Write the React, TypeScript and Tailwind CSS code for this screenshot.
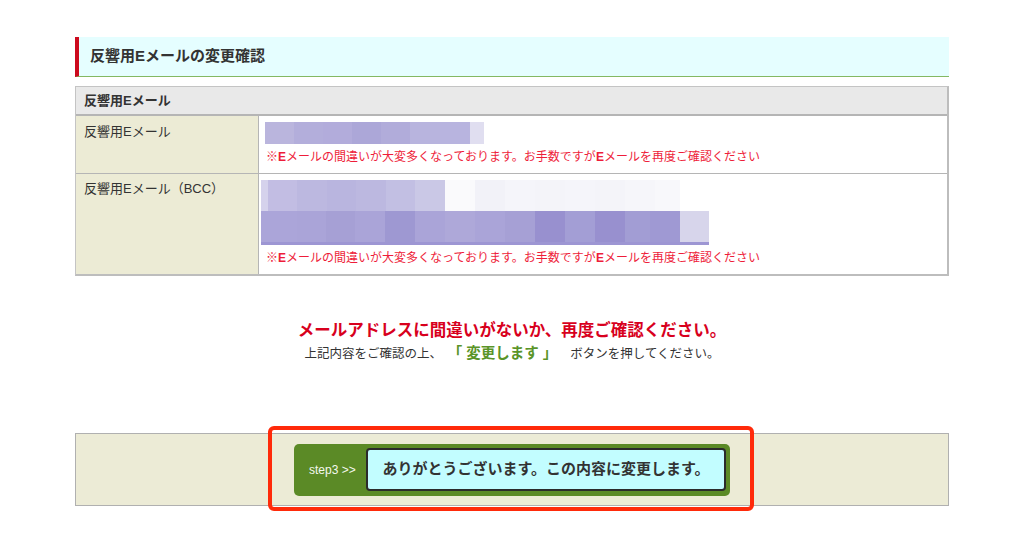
const row1 = [
  'w-[29px] bg-[#bab5dd]',
  'w-[29px] bg-[#b3aedb]',
  'w-[29px] bg-[#b2acdb]',
  'w-[29px] bg-[#aca7d8]',
  'w-[29px] bg-[#b1acda]',
  'w-[30px] bg-[#b8b4de]',
  'w-[30px] bg-[#b8b4df]',
  'w-[14px] bg-[#e0def0]',
];

const row2Top = [
  'w-[7px] bg-[#d5d2ec]',
  'w-[29px] bg-[#c2bde3]',
  'w-[30px] bg-[#bcb8e0]',
  'w-[29px] bg-[#b9b5df]',
  'w-[30px] bg-[#bcb8e0]',
  'w-[29px] bg-[#c2bfe3]',
  'w-[30px] bg-[#cac8e6]',
  'w-[30px] bg-[#fafafc]',
  'w-[30px] bg-[#f2f2f8]',
  'w-[30px] bg-[#f5f5fa]',
  'w-[30px] bg-[#f4f4f9]',
  'w-[30px] bg-[#f5f5fa]',
  'w-[30px] bg-[#f4f4f9]',
  'w-[30px] bg-[#f6f6fa]',
  'w-[25px] bg-[#f8f8fb]',
];

const row2Bottom = [
  'w-[36px] bg-[#aba5d9]',
  'w-[29px] bg-[#aaa4d8]',
  'w-[29px] bg-[#a6a0d5]',
  'w-[30px] bg-[#aaa4d8]',
  'w-[30px] bg-[#9e98d2]',
  'w-[30px] bg-[#aaa4d8]',
  'w-[30px] bg-[#aea8d9]',
  'w-[30px] bg-[#aaa4d8]',
  'w-[30px] bg-[#a6a0d5]',
  'w-[30px] bg-[#9890cf]',
  'w-[30px] bg-[#a39ed5]',
  'w-[30px] bg-[#9890cf]',
  'w-[25px] bg-[#a29dd4]',
  'w-[30px] bg-[#9f99d3]',
  'w-[29px] bg-[#d7d5eb]',
];

function Mosaic({ cells, h }: { cells: string[]; h: string }) {
  return (
    <div className={`flex ${h}`}>
      {cells.map((c, i) => (
        <div key={i} className={`h-full ${c}`} />
      ))}
    </div>
  );
}

function Note() {
  return (
    <p className="whitespace-nowrap text-[12px] leading-[14px] text-[#ee1d3a]">
      ※<span className="font-bold">E</span>メールの間違いが大変多くなっております。お手数ですが<span className="font-bold">E</span>メールを再度ご確認ください
    </p>
  );
}

export default function App() {
  return (
    <div
      className="min-h-[560px] bg-white pt-[37px]"
      style={{ fontFamily: '"Liberation Sans", "Noto Sans CJK JP", sans-serif' }}
    >
      <div className="mx-auto w-[874px]">
        <h2 className="flex h-[40px] items-center border-b border-l-[4px] border-b-[#84b863] border-l-[#cc0a1e] bg-[#e5feff] pl-[11px] text-[15px] font-bold text-[#333]">
          反響用Eメールの変更確認
        </h2>

        <div className="mt-[9px] border border-r-2 border-b-2 border-[#c4c4c4] border-r-[#bdbdbd] border-b-[#bdbdbd] text-[13px] text-[#333]">
          <div className="flex h-[29px] items-center border-b-2 border-[#b5b5b5] bg-[#e9e9e9] pl-[8px] font-bold">
            反響用Eメール
          </div>
          <div className="flex h-[58px] border-b border-[#b5b5b5]">
            <div className="w-[183px] shrink-0 border-r border-[#b5b5b5] bg-[#ecebd5] pl-[8px] pt-[6px]">
              反響用Eメール
            </div>
            <div className="flex flex-col pl-[6px] pt-[6px]">
              <Mosaic cells={row1} h="h-[22px]" />
              <div className="mt-[6px] pl-[1px]">
                <Note />
              </div>
            </div>
          </div>
          <div className="flex h-[100px]">
            <div className="w-[183px] shrink-0 border-r border-[#b5b5b5] bg-[#ecebd5] pl-[8px] pt-[5px]">
              反響用Eメール（BCC）
            </div>
            <div className="flex flex-col pl-[2px] pt-[6px]">
              <Mosaic cells={row2Top} h="h-[31px]" />
              <div className="w-[448px] border-b-[3px] border-[#9d96d3]">
                <Mosaic cells={row2Bottom} h="h-[31px]" />
              </div>
              <div className="mt-[6px] pl-[5px]">
                <Note />
              </div>
            </div>
          </div>
        </div>

        <div className="mt-[43px] flex flex-col items-center">
          <p className="text-[16.5px] font-bold leading-[22px] text-[#d8001d]">
            メールアドレスに間違いがないか、再度ご確認ください。
          </p>
          <p className="mt-[3px] text-[12.5px] leading-[18px] text-[#333]">
            上記内容をご確認の上、
            <span className="mx-[13px] text-[14.5px] font-bold text-[#5a9428]">「 変更します 」</span>
            ボタンを押してください。
          </p>
        </div>

        <div className="relative mt-[70px] flex h-[73px] items-center justify-center border border-[#b0b0b0] bg-[#ecebd6]">
          <div className="flex h-[52px] w-[436px] items-center rounded-[5px] bg-[#5b8a26] pl-[15px] pr-[4px]">
            <span className="w-[57px] text-[12px] text-[#f4f8ee]">step3 &gt;&gt;</span>
            <button className="flex h-[43px] flex-1 items-center justify-center rounded-[4px] border-2 border-[#2b2b2b] bg-[#c2fdff] text-[15px] font-bold text-[#333]">
              ありがとうございます。この内容に変更します。
            </button>
          </div>
          <div className="pointer-events-none absolute left-[192px] top-[-8px] h-[85px] w-[486px] rounded-[6px] border-[4px] border-[#ff2a0a]" />
        </div>
      </div>
    </div>
  );
}
